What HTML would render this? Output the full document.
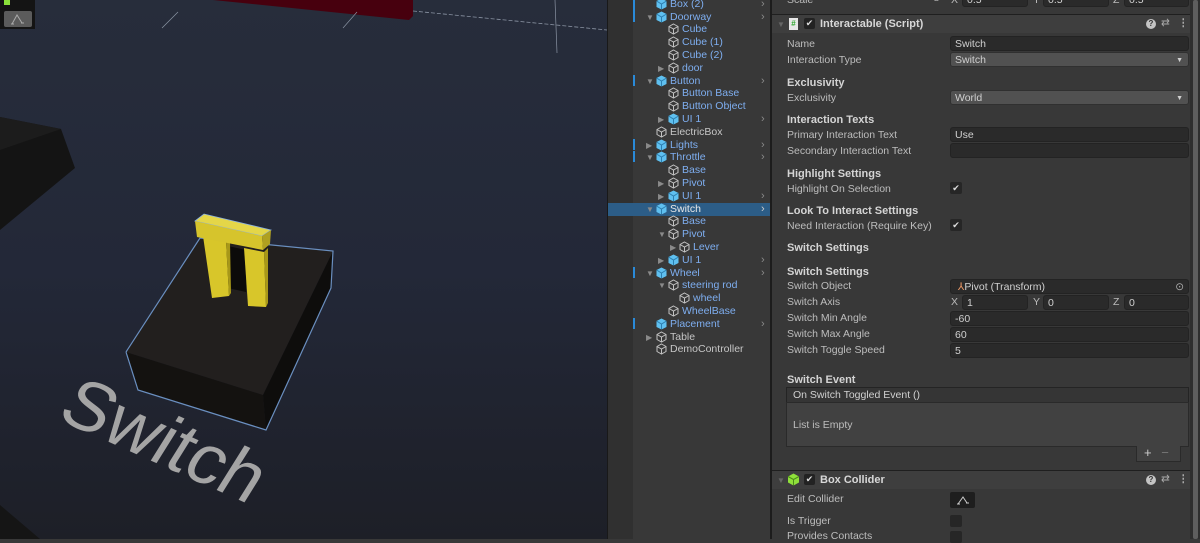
<!DOCTYPE html>
<html><head><meta charset="utf-8"><style>
*{margin:0;padding:0;box-sizing:border-box}
body{width:1200px;height:539px;overflow:hidden;background:#383838;font-family:"Liberation Sans",sans-serif;font-size:10.5px;position:relative}
.a{position:absolute;white-space:nowrap}
.h{color:#7eaef0}
.w{color:#c6c6c6}
.l{color:#bdbdbd;position:absolute;left:787px;white-space:nowrap}
.b{color:#d4d4d4;font-weight:bold;position:absolute;left:787px;white-space:nowrap;font-size:11px}
.f{position:absolute;left:950px;width:239px;height:15px;background:#2a2a2a;border-radius:3px;color:#d0d0d0;padding-left:4px;line-height:15px;border:1px solid #232323}
.dd{background:#515151;border-color:#303030}
.cb{position:absolute;left:950px;width:12px;height:12px;background:#262626;border-radius:2px;color:#ddd;font-size:9px;line-height:12px;text-align:center}
.ar{position:absolute;color:#8a8a8a;font-size:8px}
.ch{position:absolute;left:761px;color:#8a8a8a;font-size:11px}
.bar{position:absolute;left:633px;width:2px;height:11px;background:#2a8ad8}
</style></head><body>
<!-- scene -->
<svg class="a" style="left:0;top:0" width="607" height="539" viewBox="0 0 607 539">
<defs><linearGradient id="g" x1="0" y1="0" x2="0" y2="1"><stop offset="0" stop-color="#272d3b"/><stop offset="0.5" stop-color="#232838"/><stop offset="1" stop-color="#1d1f27"/></linearGradient></defs>
<rect width="607" height="539" fill="url(#g)"/>
<polygon points="213,0 413,0 413,16 409,20" fill="#47000e"/>
<line x1="413" y1="11" x2="607" y2="30" stroke="#8a93a3" stroke-width="0.8" stroke-dasharray="4,2"/>
<line x1="555" y1="0" x2="557" y2="53" stroke="#8a93a3" stroke-width="0.7"/>
<line x1="162" y1="28" x2="178" y2="12" stroke="#8a93a3" stroke-width="0.7"/>
<line x1="343" y1="28" x2="357" y2="12" stroke="#8a93a3" stroke-width="0.7"/>
<polygon points="0,117 61,129 75,168 0,230" fill="#141414"/>
<polygon points="0,117 61,129 0,150" fill="#1c1c1c"/>
<polygon points="0,505 40,539 0,539" fill="#151515"/>
<!-- switch box -->
<polygon points="126,352 200,238 333,251 263,395" fill="#221f1e"/>
<polygon points="126,352 263,395 266,430 138,390" fill="#141210"/>
<polygon points="263,395 333,251 331,288 266,430" fill="#0e0d0c"/>
<polyline points="126,352 200,238 333,251 331,288 266,430 138,390 126,352" fill="none" stroke="#6a8fc0" stroke-width="1.2"/>
<!-- lever -->
<polygon points="228,246 246,250 246,292 228,288" fill="#0c0b0a"/>
<polygon points="203,236 226,241 229,296 212,298" fill="#d8c62a"/>
<polygon points="226,241 230,242 231,293 229,296" fill="#a89818"/>
<polygon points="244,248 264,252 266,307 248,306" fill="#d8c62a"/>
<polygon points="264,252 268,248 268,303 266,307" fill="#a89818"/>
<polygon points="195,221 204,214 271,230 262,236" fill="#e4d648" stroke="#8ab0e0" stroke-width="0.8"/>
<polygon points="195,221 262,236 263,250 197,237" fill="#d6c42c"/>
<polygon points="262,236 271,230 270,244 263,250" fill="#b0a020"/>
<text x="0" y="0" transform="translate(55,418) rotate(24) skewX(-8)" font-family="Liberation Sans" font-size="72" fill="#a4a4a4">Switch</text>
<rect x="0" y="0" width="35" height="29" fill="#141414"/>
<rect x="4" y="0" width="6" height="5" fill="#8ae03a"/>
<rect x="4" y="11" width="28" height="16" rx="2" fill="#5b5b5b"/>
<path d="M12,24 L17,15 L22,23 M11,24 h3 M21,23 h3" stroke="#aaa" fill="none" stroke-width="1"/>
</svg>
<div class="a" style="left:607px;top:0;width:1px;height:539px;background:#191919"></div>
<!-- hierarchy -->
<div class="a" style="left:608px;top:0;width:25px;height:539px;background:#303030"></div>
<div class="a" style="left:770px;top:0;width:2px;height:539px;background:#1c1c1c"></div>
<div class="a" style="left:608px;top:203px;width:162px;height:13px;background:#2c5d87"></div>
<svg class="a" style="left:0;top:0" width="772" height="360">
<defs>
<g id="c"><path d="M5.5,1 L10,3.5 L10,8.5 L5.5,11 L1,8.5 L1,3.5 Z M1,3.5 L5.5,6 L10,3.5 M5.5,6 L5.5,11" fill="none" stroke="#c2c2c2" stroke-width="1"/></g>
<g id="p"><path d="M5.5,0.5 L10.5,3 L10.5,9 L5.5,11.5 L0.5,9 L0.5,3 Z" fill="#5fc0f0"/><path d="M0.5,3 L5.5,6 L10.5,3 M5.5,6 L5.5,11.5" fill="none" stroke="#2d7fb0" stroke-width="1"/></g>
</defs>
<use href="#p" x="656" y="-2"/><use href="#p" x="656" y="11"/><use href="#c" x="668" y="23"/><use href="#c" x="668" y="36"/><use href="#c" x="668" y="49"/><use href="#c" x="668" y="62"/>
<use href="#p" x="656" y="75"/><use href="#c" x="668" y="87"/><use href="#c" x="668" y="100"/><use href="#p" x="668" y="113"/><use href="#c" x="656" y="126"/><use href="#p" x="656" y="139"/><use href="#p" x="656" y="151"/>
<use href="#c" x="668" y="164"/><use href="#c" x="668" y="177"/><use href="#p" x="668" y="190"/><use href="#p" x="656" y="203"/><use href="#c" x="668" y="215"/><use href="#c" x="668" y="228"/><use href="#c" x="679" y="241"/><use href="#p" x="668" y="254"/>
<use href="#p" x="656" y="267"/><use href="#c" x="668" y="279"/><use href="#c" x="679" y="292"/><use href="#c" x="668" y="305"/><use href="#p" x="656" y="318"/><use href="#c" x="656" y="331"/><use href="#c" x="656" y="343"/>
</svg>
<div class="bar" style="top:0"></div><div class="bar" style="top:11px"></div><div class="bar" style="top:75px"></div><div class="bar" style="top:139px"></div><div class="bar" style="top:151px"></div><div class="bar" style="top:267px"></div><div class="bar" style="top:318px"></div>
<div class="ar" style="left:646px;top:13px">▼</div><div class="ar" style="left:658px;top:64px">▶</div><div class="ar" style="left:646px;top:77px">▼</div><div class="ar" style="left:658px;top:115px">▶</div><div class="ar" style="left:646px;top:141px">▶</div><div class="ar" style="left:646px;top:153px">▼</div><div class="ar" style="left:658px;top:179px">▶</div><div class="ar" style="left:658px;top:192px">▶</div><div class="ar" style="left:646px;top:205px">▼</div><div class="ar" style="left:658px;top:230px">▼</div><div class="ar" style="left:670px;top:243px">▶</div><div class="ar" style="left:658px;top:256px">▶</div><div class="ar" style="left:646px;top:269px">▼</div><div class="ar" style="left:658px;top:281px">▼</div><div class="ar" style="left:646px;top:333px">▶</div>
<div class="ch" style="top:-2px">›</div><div class="ch" style="top:11px">›</div><div class="ch" style="top:75px">›</div><div class="ch" style="top:113px">›</div><div class="ch" style="top:139px">›</div><div class="ch" style="top:151px">›</div><div class="ch" style="top:190px">›</div><div class="ch" style="top:203px;color:#ccc">›</div><div class="ch" style="top:254px">›</div><div class="ch" style="top:267px">›</div><div class="ch" style="top:318px">›</div>
<div class="a h" style="left:670px;top:-2px">Box (2)</div>
<div class="a h" style="left:670px;top:11px">Doorway</div>
<div class="a h" style="left:682px;top:23px">Cube</div>
<div class="a h" style="left:682px;top:36px">Cube (1)</div>
<div class="a h" style="left:682px;top:49px">Cube (2)</div>
<div class="a h" style="left:682px;top:62px">door</div>
<div class="a h" style="left:670px;top:75px">Button</div>
<div class="a h" style="left:682px;top:87px">Button Base</div>
<div class="a h" style="left:682px;top:100px">Button Object</div>
<div class="a h" style="left:682px;top:113px">UI 1</div>
<div class="a w" style="left:670px;top:126px">ElectricBox</div>
<div class="a h" style="left:670px;top:139px">Lights</div>
<div class="a h" style="left:670px;top:151px">Throttle</div>
<div class="a h" style="left:682px;top:164px">Base</div>
<div class="a h" style="left:682px;top:177px">Pivot</div>
<div class="a h" style="left:682px;top:190px">UI 1</div>
<div class="a" style="left:670px;top:203px;color:#e8e8e8">Switch</div>
<div class="a h" style="left:682px;top:215px">Base</div>
<div class="a h" style="left:682px;top:228px">Pivot</div>
<div class="a h" style="left:693px;top:241px">Lever</div>
<div class="a h" style="left:682px;top:254px">UI 1</div>
<div class="a h" style="left:670px;top:267px">Wheel</div>
<div class="a h" style="left:682px;top:279px">steering rod</div>
<div class="a h" style="left:693px;top:292px">wheel</div>
<div class="a h" style="left:682px;top:305px">WheelBase</div>
<div class="a h" style="left:670px;top:318px">Placement</div>
<div class="a w" style="left:670px;top:331px">Table</div>
<div class="a w" style="left:670px;top:343px">DemoController</div>
<!-- inspector -->
<div class="a" style="left:1190px;top:0;width:10px;height:539px;background:#2e2e2e"></div>
<div class="a" style="left:1193px;top:0;width:5px;height:539px;background:#5e5e5e;border-radius:2px"></div>
<div class="l" style="top:-6px">Scale</div>
<div class="a" style="left:932px;top:-6px;color:#999">⚭</div>
<div class="a" style="left:951px;top:-6px;color:#bbb">X</div><div class="f" style="left:962px;top:-8px;width:66px">0.5</div>
<div class="a" style="left:1033px;top:-6px;color:#bbb">Y</div><div class="f" style="left:1043px;top:-8px;width:66px">0.5</div>
<div class="a" style="left:1113px;top:-6px;color:#bbb">Z</div><div class="f" style="left:1124px;top:-8px;width:65px">0.5</div>
<div class="a" style="left:772px;top:14px;width:418px;height:1px;background:#1f1f1f"></div>
<div class="a" style="left:772px;top:15px;width:418px;height:18px;background:#3e3e3e"></div>
<div class="ar" style="left:777px;top:20px;color:#666">▼</div>
<div class="a" style="left:789px;top:18px;width:9px;height:12px;background:#e8e8e8;color:#3a3;font-size:8px;text-align:center;line-height:12px;font-weight:bold">#</div>
<div class="a" style="left:804px;top:18px;width:11px;height:11px;background:#222;color:#ddd;font-size:9px;text-align:center;line-height:11px;border-radius:2px">✔</div>
<div class="a" style="left:820px;top:18px;color:#d8d8d8;font-weight:bold;font-size:11px">Interactable (Script)</div>
<div class="a" style="left:1146px;top:19px;width:10px;height:10px;border-radius:5px;background:#c4c4c4;color:#333;font-size:8px;font-weight:bold;text-align:center;line-height:10px">?</div><div class="a" style="left:1161px;top:17px;color:#aaa">⇄</div><div class="a" style="left:1178px;top:17px;color:#aaa;font-weight:bold">⋮</div>
<div class="l" style="top:38px">Name</div><div class="f" style="top:36px">Switch</div>
<div class="l" style="top:54px">Interaction Type</div><div class="f dd" style="top:52px">Switch<span style="position:absolute;right:5px;font-size:7px">▼</span></div>
<div class="b" style="top:77px">Exclusivity</div>
<div class="l" style="top:92px">Exclusivity</div><div class="f dd" style="top:90px">World<span style="position:absolute;right:5px;font-size:7px">▼</span></div>
<div class="b" style="top:114px">Interaction Texts</div>
<div class="l" style="top:129px">Primary Interaction Text</div><div class="f" style="top:127px">Use</div>
<div class="l" style="top:145px">Secondary Interaction Text</div><div class="f" style="top:143px"></div>
<div class="b" style="top:168px">Highlight Settings</div>
<div class="l" style="top:183px">Highlight On Selection</div><div class="cb" style="top:182px">✔</div>
<div class="b" style="top:205px">Look To Interact Settings</div>
<div class="l" style="top:220px">Need Interaction (Require Key)</div><div class="cb" style="top:219px">✔</div>
<div class="b" style="top:242px">Switch Settings</div>
<div class="b" style="top:266px">Switch Settings</div>
<div class="l" style="top:280px">Switch Object</div><div class="f" style="top:279px">&nbsp;<span style="color:#e96">⅄</span>Pivot (Transform)<span style="position:absolute;right:4px;color:#aaa">⊙</span></div>
<div class="l" style="top:296px">Switch Axis</div>
<div class="a" style="left:951px;top:296px;color:#bbb">X</div><div class="f" style="left:962px;top:295px;width:66px">1</div>
<div class="a" style="left:1033px;top:296px;color:#bbb">Y</div><div class="f" style="left:1043px;top:295px;width:66px">0</div>
<div class="a" style="left:1113px;top:296px;color:#bbb">Z</div><div class="f" style="left:1124px;top:295px;width:65px">0</div>
<div class="l" style="top:312px">Switch Min Angle</div><div class="f" style="top:311px">-60</div>
<div class="l" style="top:328px">Switch Max Angle</div><div class="f" style="top:327px">60</div>
<div class="l" style="top:344px">Switch Toggle Speed</div><div class="f" style="top:343px">5</div>
<div class="b" style="top:374px">Switch Event</div>
<div class="a" style="left:786px;top:387px;width:403px;height:16px;background:#353535;border:1px solid #242424;color:#d0d0d0;padding-left:6px;line-height:14px">On Switch Toggled Event ()</div>
<div class="a" style="left:786px;top:402px;width:403px;height:45px;background:#414141;border:1px solid #2a2a2a;color:#bdbdbd;padding-left:6px;line-height:44px">List is Empty</div>
<div class="a" style="left:1136px;top:446px;width:45px;height:16px;background:#414141;border:1px solid #2a2a2a;border-top:none;color:#ccc;font-size:13px;line-height:14px;padding-left:7px">+ <span style="color:#777;padding-left:6px">−</span></div>
<div class="a" style="left:772px;top:470px;width:418px;height:1px;background:#1f1f1f"></div>
<div class="a" style="left:772px;top:471px;width:418px;height:18px;background:#3e3e3e"></div>
<div class="ar" style="left:777px;top:476px;color:#666">▼</div>
<svg class="a" style="left:787px;top:473px" width="13" height="13"><path d="M6.5,0.5 L12,3.5 L12,9.5 L6.5,12.5 L1,9.5 L1,3.5 Z" fill="#8fe03a"/><path d="M1,3.5 L6.5,6.5 L12,3.5 M6.5,6.5 V12.5" stroke="#4a8a1a" fill="none"/></svg>
<div class="a" style="left:804px;top:474px;width:11px;height:11px;background:#222;color:#ddd;font-size:9px;text-align:center;line-height:11px;border-radius:2px">✔</div>
<div class="a" style="left:820px;top:474px;color:#d8d8d8;font-weight:bold;font-size:11px">Box Collider</div>
<div class="a" style="left:1146px;top:475px;width:10px;height:10px;border-radius:5px;background:#c4c4c4;color:#333;font-size:8px;font-weight:bold;text-align:center;line-height:10px">?</div><div class="a" style="left:1161px;top:473px;color:#aaa">⇄</div><div class="a" style="left:1178px;top:473px;color:#aaa;font-weight:bold">⋮</div>
<div class="l" style="top:493px">Edit Collider</div>
<div class="a" style="left:950px;top:492px;width:25px;height:16px;background:#1e1e1e;border-radius:2px"></div>
<svg class="a" style="left:955px;top:494px" width="16" height="12"><path d="M3,10 L8,3 L12,9 M2,10 h3 M11,9 h3" stroke="#ccc" fill="none"/></svg>
<div class="l" style="top:515px">Is Trigger</div><div class="cb" style="top:515px"></div>
<div class="l" style="top:530px">Provides Contacts</div><div class="cb" style="top:531px"></div>
</body></html>
